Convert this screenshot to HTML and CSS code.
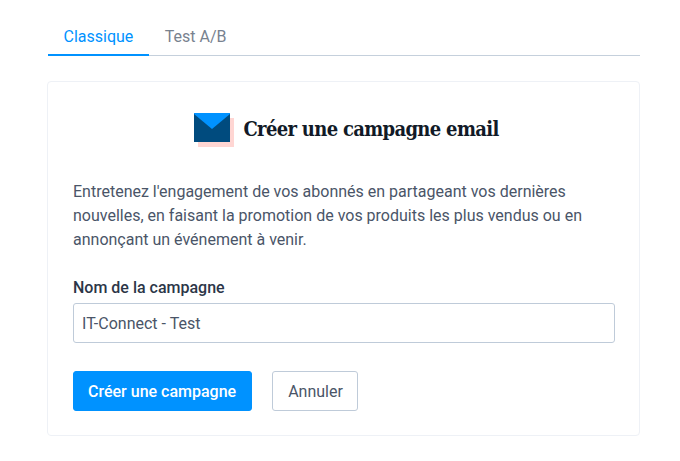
FILE: index.html
```html
<html>
    <head>
        <title>Créer une campagne</title>
        <meta name="viewport" content="width=device-width, initial-scale=1.0">
        <link rel="stylesheet" href="styles.css">
    </head>
    <body>
    <div class="container-main">
        <div class="tabs">
            <a class="tab tab-active">Classique</a>
            <a class="tab">Test A/B</a>
        </div>

        <div class="card">
            <div class="card-title">
                <svg class="mail-icon" width="40" height="34" viewBox="0 0 40 34">
                    <rect x="4" y="5" width="36" height="29" fill="#ffd6d3"/>
                    <rect x="0" y="0" width="36" height="29" fill="#004b7e"/>
                    <path d="M0 0 H36 V1 L18 16 L0 1 Z" fill="#0092ff"/>
                </svg>
                <h2 class="h2-title">Créer une campagne email</h2>
            </div>

            <p class="intro">Entretenez l'engagement de vos abonnés en partageant vos dernières nouvelles, en faisant la promotion de vos produits les plus vendus ou en annonçant un événement à venir.</p>

            <label class="field-label">Nom de la campagne</label>
            <input class="field-input" type="text" value="IT-Connect - Test">

            <div class="actions">
                <button class="btn btn-primary">Créer une campagne</button>
                <button class="btn btn-outline">Annuler</button>
            </div>
        </div>
    </div>
    </body>
</html>
```

FILE: styles.css
```css
body{
    margin: 0;
    background-color: #fff;
    color: #4a5568;
    font-family: Roboto, sans-serif;
    font-size: 16px;
}

.container-main{
    width: 593px;
    margin-left: 47px;
    padding-top: 16px;
}

.tabs{
    display: flex;
    margin-left: 1px;
    border-bottom: 1px solid #c5d0dc;
}

.tab{
    padding: 11px 16px 8px 15.5px;
    line-height: 19px;
    color: #78828f;
    margin-bottom: -1px;
}

.tab-active{
    color: #0092ff;
    border-bottom: 2px solid #0092ff;
}

.card{
    margin-top: 25px;
    padding: 31px 24px 24px 25px;
    height: 355px;
    box-sizing: border-box;
    border: 1px solid #eef1f6;
    border-radius: 4px;
}

.card-title{
    display: flex;
    justify-content: center;
    align-items: flex-start;
    gap: 9px;
    height: 36px;
    padding-left: 5px;
}

.h2-title{
    margin: 2px 0 0;
    font-family: "DejaVu Serif", serif;
    font-stretch: condensed;
    font-size: 20px;
    line-height: 28px;
    letter-spacing: -0.68px;
    color: #111a27;
}

.intro{
    margin: 31px 0 0;
    line-height: 24px;
}

.field-label{
    display: block;
    margin-top: 24px;
    font-weight: 500;
    line-height: 24px;
    color: #2c3648;
}

.field-input{
    display: block;
    width: 100%;
    height: 40px;
    margin-top: 3px;
    padding: 1px 8px 0;
    box-sizing: border-box;
    border: 1px solid #bfcbd9;
    border-radius: 3px;
    font-family: Roboto, sans-serif;
    font-size: 16px;
    color: #4a5568;
}

.actions{
    display: flex;
    gap: 20px;
    margin-top: 28px;
}

.btn{
    height: 40px;
    padding: 1px 15px 0;
    border-radius: 3px;
    font-family: Roboto, sans-serif;
    font-size: 16px;
}

.btn-primary{
    padding-left: 14px;
    background-color: #0092ff;
    border: 1px solid #0092ff;
    color: #fff;
    font-weight: 500;
}

.btn-outline{
    padding-right: 14px;
    background-color: #fff;
    border: 1px solid #bfcbd9;
    color: #4a5568;
}
```
